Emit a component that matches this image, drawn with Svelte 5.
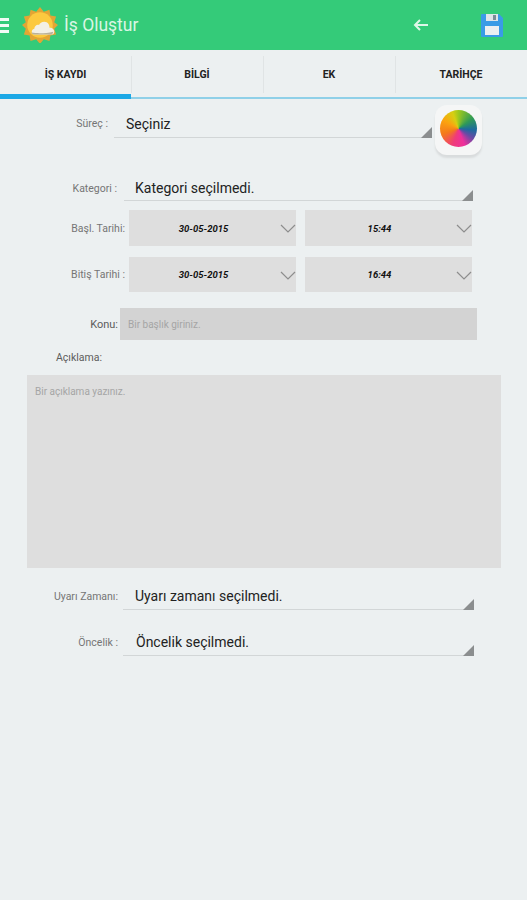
<script lang="ts">
  const tabs = ["İŞ KAYDI", "BİLGİ", "EK", "TARİHÇE"];
  const dates = [
    { label: "Başl. Tarihi:", date: "30-05-2015", time: "15:44" },
    { label: "Bitiş Tarihi :", date: "30-05-2015", time: "16:44" },
  ];
</script>

<div class="screen">
  <header>
    <div class="burger"><i></i><i></i><i></i></div>
    <svg class="logo" viewBox="0 0 38 38" width="36" height="36">
      <path fill="#e3a534" d="M19 0l4 5 6-2 1 6 6 1-2 6 4 3-4 4 2 6-6 1-1 6-6-2-4 5-4-5-6 2-1-6-6-1 2-6-4-4 4-3-2-6 6-1 1-6 6 2z" />
      <circle cx="19" cy="19" r="13.5" fill="#fcc93f" />
      <path fill="#f3f0e6" d="M13 29c-3 0-4-5 0-6 0-3 3-5 5-4 1-4 8-5 10-1 1 2 1 3 1 4 5-1 7 6 3 7z" />
      <path fill="#b9b19a" d="M13 29c-2 0-3-1-3-2 6 1 15 1 23-1 0 1-1 3-2 3z" />
    </svg>
    <h1>İş Oluştur</h1>
    <svg class="back" viewBox="0 0 16 14" width="16" height="14">
      <path fill="none" stroke="#dff7e8" stroke-width="2" d="M7 2L2 7l5 5M2 7h13" />
    </svg>
    <svg class="save" viewBox="0 0 22 23" width="22" height="23">
      <path fill="#3a9be6" d="M1 0h17l4 4v18a1 1 0 0 1-1 1H1a1 1 0 0 1-1-1V1a1 1 0 0 1 1-1z" />
      <rect x="5" y="0" width="12" height="7" fill="#dfe5e8" />
      <rect x="12" y="1" width="3" height="5" fill="#7a8d97" />
      <rect x="4" y="12" width="14" height="9" fill="#eceff1" />
    </svg>
  </header>

  <nav>
    {#each tabs as tab, i}
      <div class="tab" class:active={i === 0}><span>{tab}</span></div>
    {/each}
  </nav>

  <main>
    <div class="row surec">
      <span class="label">Süreç :</span>
      <div class="spinner">Seçiniz</div>
      <button class="wheel" aria-label="Renk"><i></i></button>
    </div>

    <div class="row kategori">
      <span class="label">Kategori :</span>
      <div class="spinner">Kategori seçilmedi.</div>
    </div>

    {#each dates as d}
      <div class="row date">
        <span class="label">{d.label}</span>
        <div class="picker wide">
          <b>{d.date}</b>
          <svg viewBox="0 0 16 9" width="16" height="9"><path fill="none" stroke="#8d8d8d" stroke-width="1.2" d="M1 1l7 7 7-7" /></svg>
        </div>
        <div class="picker">
          <b>{d.time}</b>
          <svg viewBox="0 0 16 9" width="16" height="9"><path fill="none" stroke="#8d8d8d" stroke-width="1.2" d="M1 1l7 7 7-7" /></svg>
        </div>
      </div>
    {/each}

    <div class="row konu">
      <span class="label">Konu:</span>
      <div class="input">Bir başlık giriniz.</div>
    </div>

    <div class="aciklama">Açıklama:</div>
    <div class="textarea">Bir açıklama yazınız.</div>

    <div class="row uyari">
      <span class="label">Uyarı Zamanı:</span>
      <div class="spinner">Uyarı zamanı seçilmedi.</div>
    </div>

    <div class="row oncelik">
      <span class="label">Öncelik :</span>
      <div class="spinner">Öncelik seçilmedi.</div>
    </div>
  </main>
</div>

<style>
  :global(body) {
    background: #ecf0f1;
  }

  .screen {
    width: 527px;
    height: 900px;
    overflow: hidden;
    background: #ecf0f1;
    font-family: Roboto, "Liberation Sans", sans-serif;
  }

  header {
    height: 50px;
    background: #34cb79;
    display: flex;
    align-items: center;
    position: relative;
  }
  .burger {
    width: 9px;
    display: flex;
    flex-direction: column;
    gap: 3px;
  }
  .burger i {
    display: block;
    height: 3px;
    background: #f1fbf5;
  }
  .logo {
    margin-left: 13px;
  }
  h1 {
    margin: 0 0 0 6px;
    font-size: 17.5px;
    font-weight: 400;
    color: #d9f6e4;
    flex: 1;
  }
  .back {
    margin-right: 52px;
  }
  .save {
    margin-right: 24px;
  }

  nav {
    height: 49px;
    display: grid;
    grid-template-columns: 131px 132px 132px 132px;
  }
  .tab {
    border-bottom: 2px solid #8fd0e8;
    display: flex;
    align-items: flex-start;
    justify-content: center;
    font-size: 10.5px;
    font-weight: 700;
    color: #222;
    padding-top: 18px;
    box-sizing: border-box;
    position: relative;
  }
  .tab + .tab::before {
    content: "";
    position: absolute;
    left: 0;
    top: 6px;
    bottom: 4px;
    width: 1px;
    background: #e0e4e5;
  }
  .tab.active {
    border-bottom: 5px solid #1ba8e6;
    height: 49px;
  }

  main {
    display: flex;
    flex-direction: column;
  }

  .row {
    display: flex;
  }
  .label {
    font-size: 11px;
    color: #757575;
    text-align: right;
    flex-shrink: 0;
  }
  .spinner {
    position: relative;
    border-bottom: 1px solid #d2d6d7;
    font-size: 14px;
    color: #222;
    height: 30px;
    box-sizing: border-box;
  }
  .spinner::after {
    content: "";
    position: absolute;
    right: 0;
    bottom: -1px;
    border-style: solid;
    border-width: 0 0 11px 11px;
    border-color: transparent transparent #8b8e8f transparent;
  }

  .surec {
    height: 57px;
    padding-top: 6px;
    box-sizing: border-box;
    position: relative;
  }
  .surec .label {
    width: 108px;
    font-size: 10.5px;
    line-height: 38px;
  }
  .surec .spinner {
    margin: 2px 0 0 6px;
    width: 318px;
    padding-left: 12px;
    height: 31px;
    line-height: 35px;
  }
  .wheel {
    position: absolute;
    left: 435px;
    top: 6px;
    width: 47px;
    height: 50px;
    padding: 0;
    border: none;
    border-radius: 12px;
    background: #f5f6f6;
    box-shadow: 0 3px 2px #d9dcdd;
    display: flex;
    align-items: flex-start;
    justify-content: center;
  }
  .wheel i {
    display: block;
    margin-top: 5px;
    width: 37px;
    height: 37px;
    border-radius: 50%;
    background: conic-gradient(#9dc81e 0deg, #2f9a57 55deg, #1c6a9e 95deg, #6a4aa5 125deg, #ee2f9b 160deg, #ef3b7a 200deg, #f4791c 250deg, #fba40f 300deg, #d6cf12 340deg, #9dc81e 360deg);
  }

  .kategori {
    margin-top: 14px;
    height: 31px;
  }
  .kategori .label {
    width: 117px;
    font-size: 10.5px;
    line-height: 38px;
  }
  .kategori .spinner {
    margin-left: 7px;
    width: 349px;
    padding-left: 11px;
    height: 31px;
    line-height: 36px;
  }

  .date {
    height: 36px;
    margin-top: 9px;
    align-items: center;
  }
  .date + .date {
    margin-top: 11px;
    height: 35px;
  }
  .date .label {
    width: 125px;
    font-size: 10.5px;
  }
  .picker {
    height: 100%;
    width: 167px;
    background: #dedede;
    display: flex;
    align-items: center;
    justify-content: center;
    position: relative;
    font-size: 9.5px;
    font-style: italic;
    color: #111;
  }
  .picker.wide {
    margin-left: 4px;
    margin-right: 9px;
  }
  .picker svg {
    position: absolute;
    right: 0;
    top: 14px;
  }
  .picker b {
    margin-right: 18px;
  }

  .konu {
    margin-top: 16px;
    height: 32px;
    align-items: center;
  }
  .konu .label {
    width: 118px;
    color: #5c5c5c;
  }
  .input {
    margin-left: 2px;
    width: 349px;
    padding-left: 8px;
    height: 100%;
    background: #d3d3d3;
    font-size: 10px;
    line-height: 33px;
    color: #a5a5a5;
  }

  .aciklama {
    margin: 12px 0 0 56px;
    font-size: 10.5px;
    color: #5c5c5c;
    line-height: 12px;
  }
  .textarea {
    margin: 11px 0 0 27px;
    width: 474px;
    height: 193px;
    padding: 10px 0 0 8px;
    box-sizing: border-box;
    background: #dedede;
    font-size: 10px;
    line-height: 13px;
    color: #a5a5a5;
  }

  .uyari {
    margin-top: 12px;
    height: 30px;
  }
  .oncelik {
    margin-top: 16px;
    height: 30px;
  }
  .uyari .label,
  .oncelik .label {
    width: 118px;
    font-size: 10.5px;
    line-height: 34px;
  }
  .uyari .spinner,
  .oncelik .spinner {
    margin-left: 5px;
    width: 351px;
    padding-left: 12px;
    line-height: 33px;
  }
  .oncelik .spinner {
    padding-left: 13px;
  }
</style>
